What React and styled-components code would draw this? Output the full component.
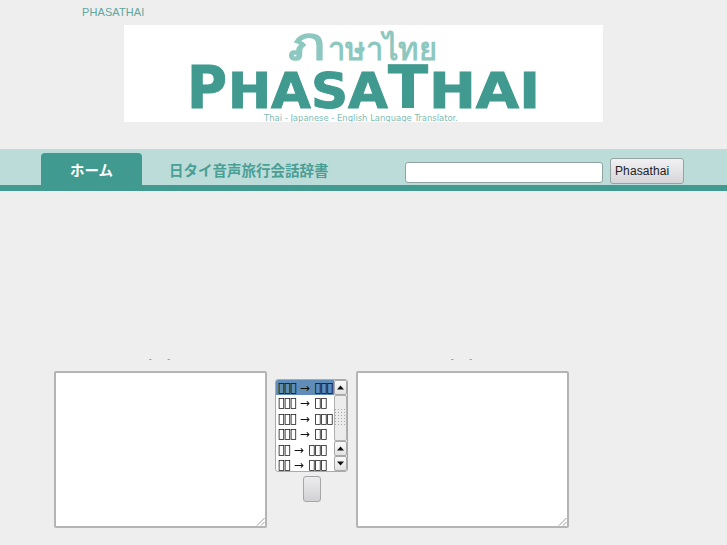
import React from "react";
import styled, { createGlobalStyle } from "styled-components";

const Global = createGlobalStyle`
  html, body { margin: 0; padding: 0; background: #eeeeee; }
  body { font-family: "Liberation Sans", Arial, sans-serif; }
`;

const Page = styled.div`
  width: 727px;
  height: 545px;
  overflow: hidden;
  display: flex;
  flex-direction: column;
`;

const SiteName = styled.h1`
  margin: 0;
  height: 25px;
  padding: 5px 0 0 82px;
  box-sizing: border-box;
  font-size: 11px;
  line-height: 14px;
  font-weight: 400;
  letter-spacing: 0.1px;
  color: #5fa69e;
`;

const LogoBox = styled.div`
  width: 479px;
  height: 97px;
  margin-left: 124px;
  background: #fff;
  flex: none;
  overflow: hidden;
`;

const Nav = styled.nav`
  margin-top: 27px;
  height: 42px;
  box-sizing: border-box;
  background: #bcdcd9;
  border-bottom: 6px solid #409a8f;
  display: flex;
  align-items: flex-end;
  padding-left: 41px;
  flex: none;
`;

const Tab = styled.a`
  width: 101px;
  height: 32px;
  box-sizing: border-box;
  padding-top: 7px;
  border-radius: 4px 4px 0 0;
  background: ${(p) => (p.$active ? "#409a8f" : "transparent")};
  color: ${(p) => (p.$active ? "#fff" : "#409a8f")};
  font: 700 14.5px/20px "Noto Sans CJK JP", sans-serif;
  text-align: center;
`;

const DictLink = styled.a`
  margin-left: 27px;
  height: 32px;
  padding-top: 7px;
  box-sizing: border-box;
  color: #4a9f95;
  font: 700 14.5px/20px "Noto Sans CJK JP", sans-serif;
  white-space: nowrap;
`;

const SearchArea = styled.form`
  margin: 0 0 1px 76px;
  display: flex;
  align-items: flex-end;
  gap: 7px;
`;

const SearchInput = styled.input`
  width: 198px;
  height: 21px;
  box-sizing: border-box;
  margin: 0 0 1px;
  border: 1.5px solid #8fa3a1;
  border-radius: 3px;
  background: #fff;
  outline: none;
`;

const SearchButton = styled.button`
  width: 74px;
  height: 26px;
  margin: 0;
  padding: 0 0 0 4.5px;
  box-sizing: border-box;
  text-align: left;
  border: 1px solid #97a3a3;
  border-radius: 3px;
  background: linear-gradient(#f1f1f3, #d6d6da);
  color: #222;
  font: 400 12px "Liberation Sans", sans-serif;
  letter-spacing: 0.1px;
`;

const Translator = styled.section`
  margin: 163px 0 0 54px;
  display: flex;
  align-items: flex-start;
  gap: 8px;
`;

const Column = styled.div`
  width: 213px;
  display: flex;
  flex-direction: column;
`;

const Caption = styled.div`
  height: 17px;
  padding-right: 2px;
  font-size: 9px;
  line-height: 11px;
  color: #888;
  text-align: center;
  word-spacing: 13px;
`;

const TextBox = styled.textarea`
  width: 213px;
  height: 157px;
  margin: 0;
  box-sizing: border-box;
  border: 2px solid #b4b4b4;
  border-radius: 2px;
  background: #fff;
  outline: none;
  display: block;
  resize: none;
`;

const Middle = styled.div`
  width: 73px;
  padding-top: 25px;
  display: flex;
  flex-direction: column;
  align-items: center;
  gap: 4px;
`;

const ListBox = styled.div`
  width: 73px;
  height: 93px;
  box-sizing: border-box;
  border: 1px solid #aaa;
  border-radius: 3px;
  background: #fff;
  display: flex;
  overflow: hidden;
`;

const Options = styled.ul`
  list-style: none;
  margin: 0;
  padding: 0;
  width: 58px;
  flex: none;
  overflow: hidden;
  will-change: opacity;
`;

const Option = styled.li`
  height: 15.4px;
  line-height: 15.4px;
  padding-left: 1.5px;
  white-space: nowrap;
  overflow: hidden;
  font-family: "DejaVu Sans", sans-serif;
  font-size: 12px;
  word-spacing: 0.4px;
  color: #111;
  background: ${(p) => (p.$selected ? "#5f8cb8" : "transparent")};
`;

const Tofu = styled.span`
  letter-spacing: -1.7px;
  font-size: 14px;
`;

const Scrollbar = styled.div`
  flex: 1;
  display: flex;
  flex-direction: column;
  background: #e4e4e4;
`;

const Stepper = styled.div`
  height: 15px;
  flex: none;
  box-sizing: border-box;
  border: 1px solid #a8a8a8;
  border-radius: 2px;
  background: linear-gradient(#fafafa, #e2e2e2);
  display: flex;
  align-items: center;
  justify-content: center;
`;

const Thumb = styled.div`
  flex: 1;
  box-sizing: border-box;
  border: 1px solid #b0b0b0;
  border-radius: 2px;
  background: #ececec;
  display: flex;
  align-items: center;
  justify-content: center;
`;

const SwapButton = styled.button`
  width: 18px;
  height: 26px;
  padding: 0;
  box-sizing: border-box;
  border: 1px solid #a6a6a6;
  border-radius: 3px;
  background: linear-gradient(#ececee, #d2d2d6);
`;

const Grip = styled.svg`
  display: block;
`;

const Resize = styled.svg`
  position: absolute;
  right: 2px;
  bottom: 2px;
`;

const BoxWrap = styled.div`
  position: relative;
  height: 157px;
`;

const Arrow = ({ down }) => (
  <svg width="7" height="5" viewBox="0 0 7 5">
    <path d={down ? "M0 0.5H7L3.5 4.5Z" : "M0 4.5H7L3.5 0.5Z"} fill="#111" />
  </svg>
);

const Corner = () => (
  <Resize width="9" height="9" viewBox="0 0 9 9">
    <path d="M1 8.5L8.5 1M5 8.5L8.5 5" stroke="#999" strokeWidth="1" fill="none" />
  </Resize>
);

const Box = () => (
  <BoxWrap>
    <TextBox />
    <Corner />
  </BoxWrap>
);

const Logo = () => (
  <svg width="479" height="97" viewBox="0 0 479 97">
    <g fontFamily="'Noto Sans','DejaVu Sans',sans-serif" fontWeight="700" fill="#8cc8c0">
      <text x="164" y="35" fontSize="46" textLength="37" lengthAdjust="spacingAndGlyphs">ภ</text>
      <text x="204" y="35" fontSize="32" textLength="109" lengthAdjust="spacingAndGlyphs">าษาไทย</text>
    </g>
    <g fontFamily="'DejaVu Sans',sans-serif" fontWeight="700" fill="#409a8f" stroke="#409a8f" strokeWidth="1">
      <text x="63" y="83" fontSize="59" textLength="40" lengthAdjust="spacingAndGlyphs">P</text>
      <text x="104" y="83" fontSize="49" textLength="160" lengthAdjust="spacingAndGlyphs">HASA</text>
      <text x="264" y="83" fontSize="59" textLength="40" lengthAdjust="spacingAndGlyphs">T</text>
      <text x="305" y="83" fontSize="49" textLength="111" lengthAdjust="spacingAndGlyphs">HAI</text>
    </g>
    <text x="140" y="96" fontFamily="'DejaVu Sans',sans-serif" fontSize="8.5" fill="#7dbcb4" textLength="194" lengthAdjust="spacingAndGlyphs">Thai - Japanese - English Language Translator.</text>
  </svg>
);

const rows = [
  ["▯▯▯", "▯▯▯"],
  ["▯▯▯", "▯▯"],
  ["▯▯▯", "▯▯▯"],
  ["▯▯▯", "▯▯"],
  ["▯▯", "▯▯▯"],
  ["▯▯", "▯▯▯"],
];

export default function App() {
  return (
    <Page>
      <Global />
      <SiteName>PHASATHAI</SiteName>
      <LogoBox><Logo /></LogoBox>
      <Nav>
        <Tab $active>ホーム</Tab>
        <DictLink>日タイ音声旅行会話辞書</DictLink>
        <SearchArea onSubmit={(e) => e.preventDefault()}>
          <SearchInput />
          <SearchButton>Phasathai</SearchButton>
        </SearchArea>
      </Nav>
      <Translator>
        <Column>
          <Caption>- -</Caption>
          <Box />
        </Column>
        <Middle>
          <ListBox>
            <Options>
              {rows.map(([a, b], i) => (
                <Option key={i} $selected={i === 0}>
                  <Tofu>{a}</Tofu> → <Tofu>{b}</Tofu>
                </Option>
              ))}
            </Options>
            <Scrollbar>
              <Stepper><Arrow /></Stepper>
              <Thumb>
                <Grip width="11" height="18" viewBox="0 0 11 18">
                  {[0, 1, 2, 3, 4, 5].flatMap((r) =>
                    [0, 1, 2, 3].map((c) => (
                      <rect key={`${r}-${c}`} x={c * 3} y={r * 3} width="1" height="1" fill="#aaa" />
                    ))
                  )}
                </Grip>
              </Thumb>
              <Stepper><Arrow /></Stepper>
              <Stepper><Arrow down /></Stepper>
            </Scrollbar>
          </ListBox>
          <SwapButton />
        </Middle>
        <Column>
          <Caption>- -</Caption>
          <Box />
        </Column>
      </Translator>
    </Page>
  );
}
